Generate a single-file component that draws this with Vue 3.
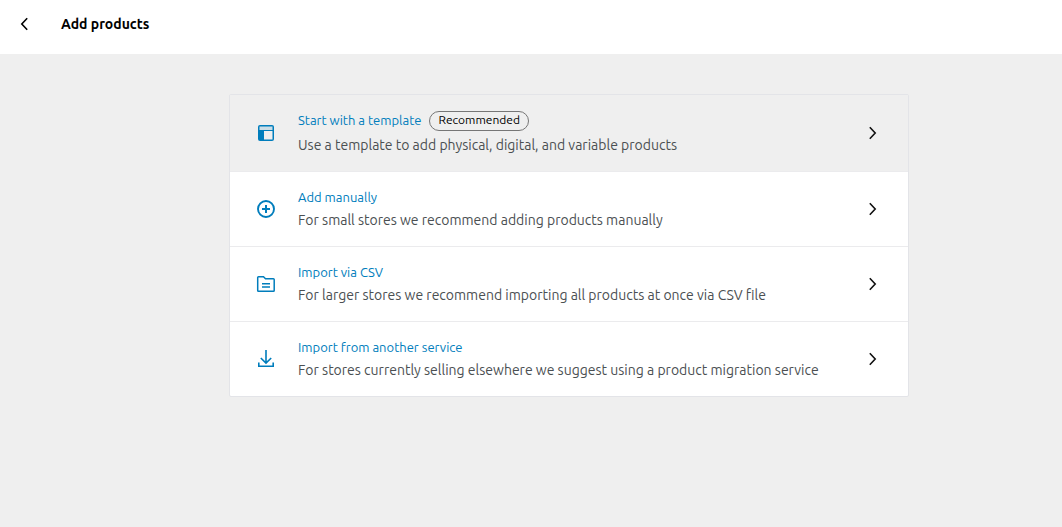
<script setup>
const options = [
  { id: 'template', title: 'Start with a template', badge: 'Recommended', text: 'Use a template to add physical, digital, and variable products' },
  { id: 'manual', title: 'Add manually', text: 'For small stores we recommend adding products manually' },
  { id: 'csv', title: 'Import via CSV', text: 'For larger stores we recommend importing all products at once via CSV file' },
  { id: 'service', title: 'Import from another service', text: 'For stores currently selling elsewhere we suggest using a product migration service' },
]
</script>

<template>
  <div class="page">
    <header class="bar">
      <button class="back" type="button" aria-label="Back">
        <svg width="24" height="24" viewBox="0 0 24 24" fill="none" stroke="currentColor" stroke-width="1.6">
          <path d="M15.2 6.2 9.8 12l5.4 5.8" />
        </svg>
      </button>
      <h1>Add products</h1>
    </header>
    <main class="content">
      <ul class="card">
        <li v-for="o in options" :key="o.id">
          <a href="#" class="row" :class="{ active: o.badge }">
            <svg class="icon" width="24" height="24" viewBox="0 0 24 24" fill="none" stroke="currentColor">
              <template v-if="o.id === 'template'">
                <rect x="4" y="4" width="16" height="16" rx="2" fill="currentColor" stroke="none" />
                <path d="M5.5 5.5h13V9h-13z" fill="#efefef" fill-opacity=".85" stroke="none" />
                <path d="M10 10h8.5v8.5H10z" fill="#efefef" stroke="none" />
              </template>
              <template v-else-if="o.id === 'manual'">
                <circle cx="12" cy="12" r="8" stroke-width="1.9" />
                <path d="M12 8v8M8 12h8" stroke-width="2" />
              </template>
              <template v-else-if="o.id === 'csv'">
                <path d="M4.5 4.8h5l2 2h7.9q.8 0 .8.8v10.8q0 .8-.8.8H4.5q-.8 0-.8-.8V5.6q0-.8.8-.8z" stroke-width="1.5" />
                <path d="M8 11.8h8M8 15h8" stroke-width="1.5" />
              </template>
              <template v-else>
                <path d="M12 3v12.6M6.8 11l5.2 5.1 5.2-5.1" stroke-width="1.6" />
                <path d="M4.8 15.5v3.7h14.4v-3.7" stroke-width="1.6" />
              </template>
            </svg>
            <span class="body">
              <span class="title">
                {{ o.title }}
                <span v-if="o.badge" class="badge">{{ o.badge }}</span>
              </span>
              <span class="text">{{ o.text }}</span>
            </span>
            <svg class="arrow" width="24" height="24" viewBox="0 0 24 24" fill="none" stroke="currentColor" stroke-width="1.6">
              <path d="M9.8 6.2 15.2 12l-5.4 5.8" />
            </svg>
          </a>
        </li>
      </ul>
    </main>
  </div>
</template>

<style>
body {
  background: #efefef;
}
</style>

<style scoped>
.page {
  font-family: Ubuntu, "Noto Sans", sans-serif;
  font-size: 14px;
  color: #000;
}
.bar {
  display: flex;
  align-items: flex-start;
  gap: 25px;
  padding: 12px 12px 18px;
  background: #fff;
}
.back {
  display: flex;
  padding: 0;
  border: 0;
  background: none;
  color: #000;
  cursor: pointer;
}
h1 {
  margin: 0;
  font-size: 14px;
  line-height: 24px;
  font-weight: 700;
}
.content {
  padding: 40px 0 40px 76px;
}
.card {
  max-width: 678px;
  margin: 0 auto;
  padding: 0;
  list-style: none;
  background: #fff;
  border: 1px solid #e3e4e8;
  border-radius: 2px;
}
li + li {
  border-top: 1px solid #ebebed;
}
.row {
  display: flex;
  align-items: center;
  padding: 16px 24px;
  text-decoration: none;
}
.active {
  background: #efefef;
}
.icon {
  flex: none;
  color: #007dbc;
}
.body {
  flex: 1;
  display: flex;
  flex-direction: column;
  gap: 4px;
  margin-left: 20px;
}
.title {
  display: flex;
  align-items: flex-start;
  gap: 8px;
  font-size: 13px;
  line-height: 18px;
  color: #007dbc;
}
.badge {
  padding: 0 8px 2px;
  border: 1px solid #767676;
  border-radius: 10px;
  font-size: 12px;
  line-height: 16px;
  color: #000;
}
.text {
  line-height: 20px;
  color: #4b4f52;
}
.arrow {
  flex: none;
  color: #111;
}
</style>
